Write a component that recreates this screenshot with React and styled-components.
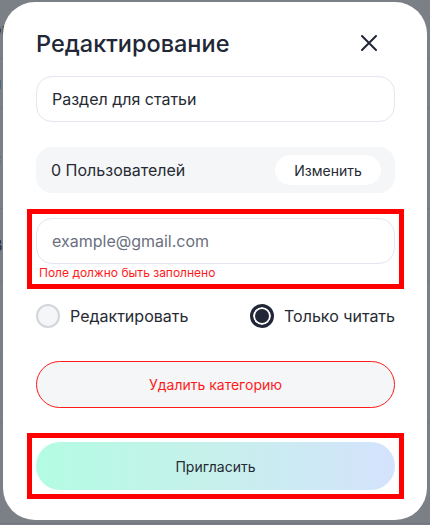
import React, { useState } from 'react';
import styled, { createGlobalStyle } from 'styled-components';

const GlobalStyle = createGlobalStyle`
  html, body {
    margin: 0;
    padding: 0;
    background: #7b7f88;
    font-family: Inter, "Noto Sans", sans-serif;
  }
`;

const Page = styled.div`
  position: relative;
  width: 430px;
  height: 525px;
  overflow: hidden;
  background: #ffffff;
`;

const Backdrop = styled.div`
  display: flex;
  flex-direction: column;
  margin-left: -8px;
`;

const BackdropRow = styled.div`
  height: ${(p) => p.h}px;
  border-bottom: 1px solid #e4e6ea;
  display: flex;
  align-items: center;
  font-size: 16px;
  color: #1f2433;
`;

const Overlay = styled.div`
  position: absolute;
  inset: 0;
  background: rgba(48, 54, 66, 0.64);
  padding: 2px 3px 0 3px;
`;

const Modal = styled.div`
  width: 424px;
  height: 518px;
  box-sizing: border-box;
  background: #ffffff;
  border-radius: 32px;
  padding: 25px 32px 0 33px;
  display: flex;
  flex-direction: column;
`;

const Header = styled.div`
  display: flex;
  align-items: center;
  justify-content: space-between;
  height: 32px;
  margin-bottom: 17px;
`;

const Title = styled.h2`
  margin: 0;
  font-size: 23.5px;
  font-weight: 500;
  color: #212736;
`;

const CloseButton = styled.button`
  border: 0;
  background: none;
  padding: 0;
  margin-right: 17px;
  width: 18px;
  height: 18px;
  display: flex;
  align-items: center;
  justify-content: center;
  cursor: pointer;
`;

const TextInput = styled.input`
  box-sizing: border-box;
  width: 100%;
  height: 46px;
  border: 1px solid #e6e4f0;
  border-radius: 16px;
  padding: 0 15px;
  font-family: inherit;
  font-size: 16px;
  color: #262a33;
  background: #ffffff;
  outline: none;

  &::placeholder {
    color: #6b7080;
  }
`;

const UsersBox = styled.div`
  box-sizing: border-box;
  height: 46px;
  margin-top: 25px;
  border-radius: 16px;
  background: #f5f6f8;
  display: flex;
  align-items: center;
  justify-content: space-between;
  padding: 0 14px 0 15px;
  font-size: 16px;
  color: #262a33;
`;

const PillButton = styled.button`
  border: 0;
  background: #ffffff;
  height: 30px;
  width: 106px;
  border-radius: 15px;
  font-family: inherit;
  font-size: 14px;
  color: #262a33;
  cursor: pointer;
`;

const Highlight = styled.div`
  margin: ${(p) => p.top}px -9px 0 -9px;
  border: 5px solid #ff0000;
  padding: 4px;
  display: flex;
  flex-direction: column;
`;

const ErrorText = styled.div`
  font-size: 12px;
  color: #ff1a1a;
  padding: 2px 0 0 3px;
  line-height: 14px;
`;

const RadioRow = styled.div`
  display: flex;
  justify-content: space-between;
  align-items: center;
  margin-top: 15px;
  height: 24px;
`;

const RadioLabel = styled.label`
  display: flex;
  align-items: center;
  gap: 10px;
  font-size: 16px;
  color: #262a33;
  cursor: pointer;
`;

const RadioDot = styled.span`
  box-sizing: border-box;
  width: 24px;
  height: 24px;
  border-radius: 50%;
  border: ${(p) => (p.checked ? '3px solid #212736' : '2px solid #d3d5db')};
  background: ${(p) => (p.checked ? '#212736' : '#f5f6f8')};
  box-shadow: ${(p) => (p.checked ? 'inset 0 0 0 2px #ffffff' : 'none')};
`;

const DeleteButton = styled.button`
  box-sizing: border-box;
  width: 100%;
  height: 47px;
  margin-top: 33px;
  border: 1px solid #ff1a1a;
  border-radius: 24px;
  background: #f5f6f8;
  font-family: inherit;
  font-size: 14px;
  color: #ff1a1a;
  cursor: pointer;
`;

const InviteButton = styled.button`
  width: 100%;
  height: 48px;
  border: 0;
  border-radius: 24px;
  background: linear-gradient(90deg, #b3fce3 0%, #c5f1ea 45%, #d4e3fd 100%);
  font-family: inherit;
  font-size: 14px;
  color: #262a33;
  cursor: pointer;
`;

const backdropRows = [
  { h: 58, t: 'он' },
  { h: 48, t: 'н' },
  { h: 100, t: 'с' },
  { h: 72, t: 'В' },
  { h: 140, t: 'я' },
  { h: 100, t: '' },
];

export default function App() {
  const [role, setRole] = useState('read');

  return (
    <>
      <GlobalStyle />
      <Page>
        <Backdrop>
          {backdropRows.map((r, i) => (
            <BackdropRow key={i} h={r.h}>{r.t}</BackdropRow>
          ))}
        </Backdrop>
        <Overlay>
          <Modal>
            <Header>
              <Title>Редактирование</Title>
              <CloseButton aria-label="Закрыть">
                <svg width="16" height="16" viewBox="0 0 16 16" fill="none">
                  <path d="M1 1L15 15M15 1L1 15" stroke="#212736" strokeWidth="2" strokeLinecap="round" />
                </svg>
              </CloseButton>
            </Header>

            <TextInput defaultValue="Раздел для статьи" />

            <UsersBox>
              <span>0 Пользователей</span>
              <PillButton>Изменить</PillButton>
            </UsersBox>

            <Highlight top={16}>
              <TextInput placeholder="example@gmail.com" />
              <ErrorText>Поле должно быть заполнено</ErrorText>
            </Highlight>

            <RadioRow>
              <RadioLabel onClick={() => setRole('edit')}>
                <RadioDot checked={role === 'edit'} />
                Редактировать
              </RadioLabel>
              <RadioLabel onClick={() => setRole('read')}>
                <RadioDot checked={role === 'read'} />
                Только читать
              </RadioLabel>
            </RadioRow>

            <DeleteButton>Удалить категорию</DeleteButton>

            <Highlight top={25}>
              <InviteButton>Пригласить</InviteButton>
            </Highlight>
          </Modal>
        </Overlay>
      </Page>
    </>
  );
}
